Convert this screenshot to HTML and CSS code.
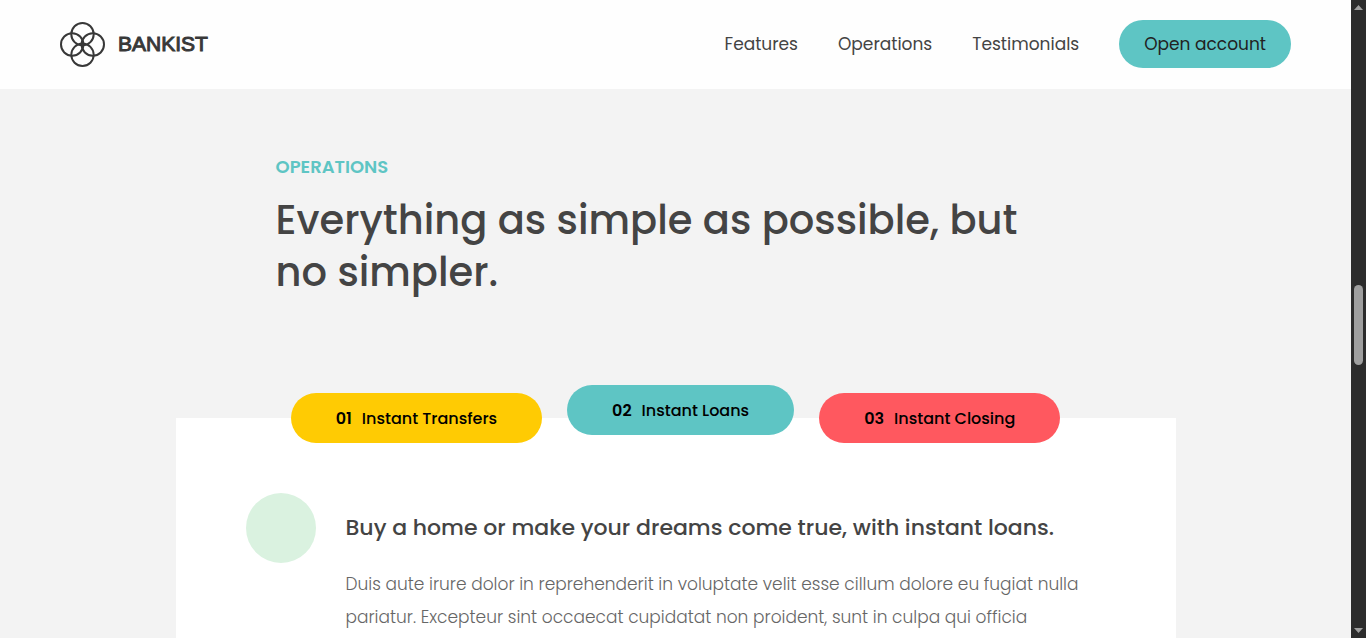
FILE: index.html
```html
<!DOCTYPE html>
<html lang="en">
<head>
<meta charset="utf-8">
<title>Bankist</title>
<link rel="stylesheet" href="styles.css">
</head>
<body>
<div class="page">
  <header class="nav">
    <a class="logo" href="#">
      <svg class="logo-mark" viewBox="0 0 45 45" aria-hidden="true">
        <g fill="none" stroke="#383838" stroke-width="2">
          <circle cx="22.500" cy="12.200" r="11.200"/>
          <circle cx="32.800" cy="22.500" r="11.200"/>
          <circle cx="22.500" cy="32.800" r="11.200"/>
          <circle cx="12.200" cy="22.500" r="11.200"/>
        </g>
      </svg>
      <span class="logo-name">BANKIST</span>
    </a>
    <nav class="nav-links">
      <a class="nav-link" href="#features">Features</a>
      <a class="nav-link" href="#operations">Operations</a>
      <a class="nav-link" href="#testimonials">Testimonials</a>
      <a class="nav-link nav-button" href="#open">Open account</a>
    </nav>
  </header>
  <main class="section" id="operations">
    <div class="section-title">
      <h2 class="section-label">Operations</h2>
      <h3 class="section-heading">Everything as simple as possible, but no simpler.</h3>
    </div>
    <div class="operations">
      <div class="tabs">
        <button class="tab tab-yellow" type="button"><span class="tab-number">01</span>Instant Transfers</button>
        <button class="tab tab-teal tab-active" type="button"><span class="tab-number">02</span>Instant Loans</button>
        <button class="tab tab-red" type="button"><span class="tab-number">03</span>Instant Closing</button>
      </div>
      <div class="content">
        <div class="content-icon"></div>
        <div class="content-body">
          <h5 class="content-heading">Buy a home or make your dreams come true, with instant loans.</h5>
          <p class="content-text">Duis aute irure dolor in reprehenderit in voluptate velit esse cillum dolore eu fugiat nulla pariatur. Excepteur sint occaecat cupidatat non proident, sunt in culpa qui officia</p>
        </div>
      </div>
    </div>
  </main>
</div>
<div class="scrollbar" aria-hidden="true">
  <svg class="arrow" viewBox="0 0 9 5"><path d="M4.500 0L9 5H0z" fill="#9f9f9f"/></svg>
  <div class="thumb"></div>
  <svg class="arrow" viewBox="0 0 9 5"><path d="M0 0H9L4.500 5z" fill="#9f9f9f"/></svg>
</div>
</body>
</html>
```
FILE: styles.css
```css
* {
  margin: 0;
  padding: 0;
  box-sizing: border-box;
}

body {
  display: flex;
  height: 100vh;
  overflow: hidden;
  background: #f3f3f3;
  color: #444;
  font-family: Poppins, Inter, sans-serif;
}

.page {
  flex: 1;
  min-width: 0;
  overflow: hidden;
}

.nav {
  display: flex;
  align-items: center;
  justify-content: space-between;
  padding: 20px 60px 21px;
  background: #fefefe;
}

.logo {
  display: flex;
  align-items: center;
  gap: 13px;
  color: #383838;
  text-decoration: none;
}

.logo-mark {
  width: 45px;
  height: 45px;
}

.logo-name {
  font: 400 21px "Liberation Sans", sans-serif;
  -webkit-text-stroke: 1px #383838;
}

.nav-links {
  display: flex;
  align-items: center;
  gap: 40px;
}

.nav-link {
  color: #444;
  font-size: 17px;
  line-height: 28px;
  text-decoration: none;
}

.nav-button {
  padding: 10px 25px;
  border-radius: 24px;
  background: #5ec5c4;
  color: #222;
}

.section {
  padding-top: 66px;
}

.section-title {
  max-width: 800px;
  margin: 0 auto;
}

.section-label {
  margin-bottom: 15px;
  color: #5ec5c4;
  font-size: 18px;
  font-weight: 600;
  line-height: 24px;
  text-transform: uppercase;
}

.section-heading {
  font-size: 40px;
  font-weight: 500;
  line-height: 52px;
}

.operations {
  max-width: 1000px;
  margin: 120px auto 0;
  background: #fff;
}

.tabs {
  display: flex;
  justify-content: center;
  gap: 25px;
}

.tab {
  height: 50px;
  padding: 0 45px;
  border: 0;
  border-radius: 25px;
  color: #000;
  font-family: inherit;
  font-size: 16px;
  font-weight: 500;
  white-space: nowrap;
  transform: translateY(-50%);
}

.tab-active {
  transform: translateY(-66%);
}

.tab-number {
  margin-right: 10px;
  font-weight: 600;
}

.tab-yellow { background: #ffcb03; }
.tab-teal { background: #5ec5c4; }
.tab-red { background: #ff585f; }

.content {
  display: flex;
  gap: 30px;
  padding: 25px 70px 65px;
}

.content-icon {
  flex: none;
  width: 70px;
  height: 70px;
  border-radius: 50%;
  background: #daf2e0;
}

.content-body {
  padding-top: 17px;
}

.content-heading {
  margin-bottom: 22px;
  font-size: 22px;
  font-weight: 500;
  line-height: 36px;
}

.content-text {
  color: #666;
  font-size: 17px;
  font-weight: 300;
  line-height: 33px;
}

.scrollbar {
  position: relative;
  display: flex;
  flex: none;
  flex-direction: column;
  align-items: center;
  justify-content: space-between;
  width: 15px;
  padding: 5px 0;
  background: #2c2c2c;
}

.arrow {
  width: 9px;
  height: 5px;
}

.thumb {
  position: absolute;
  top: 285px;
  width: 9px;
  height: 80px;
  border-radius: 5px;
  background: #9f9f9f;
}
```
